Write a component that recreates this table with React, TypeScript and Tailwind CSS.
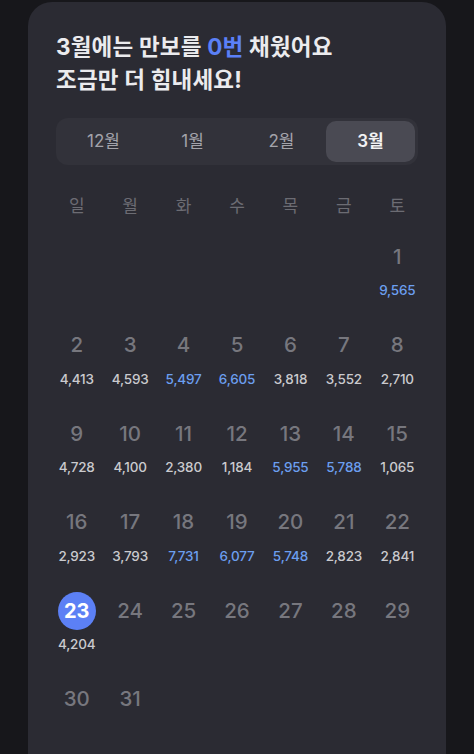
import { useState } from 'react';

const months = ['12월', '1월', '2월', '3월'];
const weekdays = ['일', '월', '화', '수', '목', '금', '토'];

// 3월 걸음 수 (없는 날은 null)
const steps: Record<number, number> = {
  1: 9565, 2: 4413, 3: 4593, 4: 5497, 5: 6605, 6: 3818, 7: 3552, 8: 2710,
  9: 4728, 10: 4100, 11: 2380, 12: 1184, 13: 5955, 14: 5788, 15: 1065,
  16: 2923, 17: 3793, 18: 7731, 19: 6077, 20: 5748, 21: 2823, 22: 2841,
  23: 4204,
};

const TODAY = 23;
const FIRST_WEEKDAY = 6;

const App = () => {
  const [month, setMonth] = useState(3);

  const cells: (number | null)[] = [
    ...Array(FIRST_WEEKDAY).fill(null),
    ...Array.from({ length: 31 }, (_, i) => i + 1),
  ];

  return (
    <div
      className="h-[754px] overflow-hidden bg-[#17171b] px-[28px] pt-[2px]"
      style={{ fontFamily: "Inter, 'Noto Sans CJK KR', sans-serif" }}
    >
      <div className="h-[800px] rounded-t-[24px] bg-[#2b2b33] px-7 pt-[28px]">
        <h1 className="text-[22.5px] font-bold leading-[33px] tracking-[0.2px] text-[#ebebee]">
          3월에는 만보를 <span className="text-[#5b80f7]">0번</span> 채웠어요
          <br />
          조금만 더 힘내세요!
        </h1>

        <div className="mt-[22px] grid grid-cols-4 rounded-[12px] bg-[#32323a] p-[3px]">
          {months.map((m, i) => (
            <button
              key={m}
              onClick={() => setMonth(i)}
              className={`h-[41px] rounded-[10px] text-[17px] ${
                month === i ? 'bg-[#4a4a53] font-semibold text-[#f2f2f4]' : 'text-[#a3a3aa]'
              }`}
            >
              {m}
            </button>
          ))}
        </div>

        <div className="-mx-[6px] mt-[29px] grid grid-cols-7">
          {weekdays.map((w) => (
            <div key={w} className="text-center text-[17px] leading-[24px] text-[#6c6c73]">
              {w}
            </div>
          ))}
        </div>

        <div className="-mx-[6px] mt-[20px] grid grid-cols-7">
          {cells.map((d, i) => (
            <div key={i} className="flex h-[88.5px] flex-col items-center">
              {d !== null && (
                <>
                  {d === TODAY ? (
                    <div className="flex h-[38px] w-[38px] items-center justify-center rounded-full bg-[#5c80f5] text-[20px] font-bold text-white">
                      {d}
                    </div>
                  ) : (
                    <div className="flex h-[38px] items-center text-[20.5px] font-medium text-[#77777e]">
                      {d}
                    </div>
                  )}
                  {steps[d] !== undefined && (
                    <div
                      className={`mt-[5px] text-[13.5px] font-medium leading-[18px] tracking-[-0.2px] ${
                        steps[d] >= 5000 ? 'text-[#6c9ff0]' : 'text-[#cacace]'
                      }`}
                    >
                      {steps[d].toLocaleString('en-US')}
                    </div>
                  )}
                </>
              )}
            </div>
          ))}
        </div>
      </div>
    </div>
  );
};

export default App;
